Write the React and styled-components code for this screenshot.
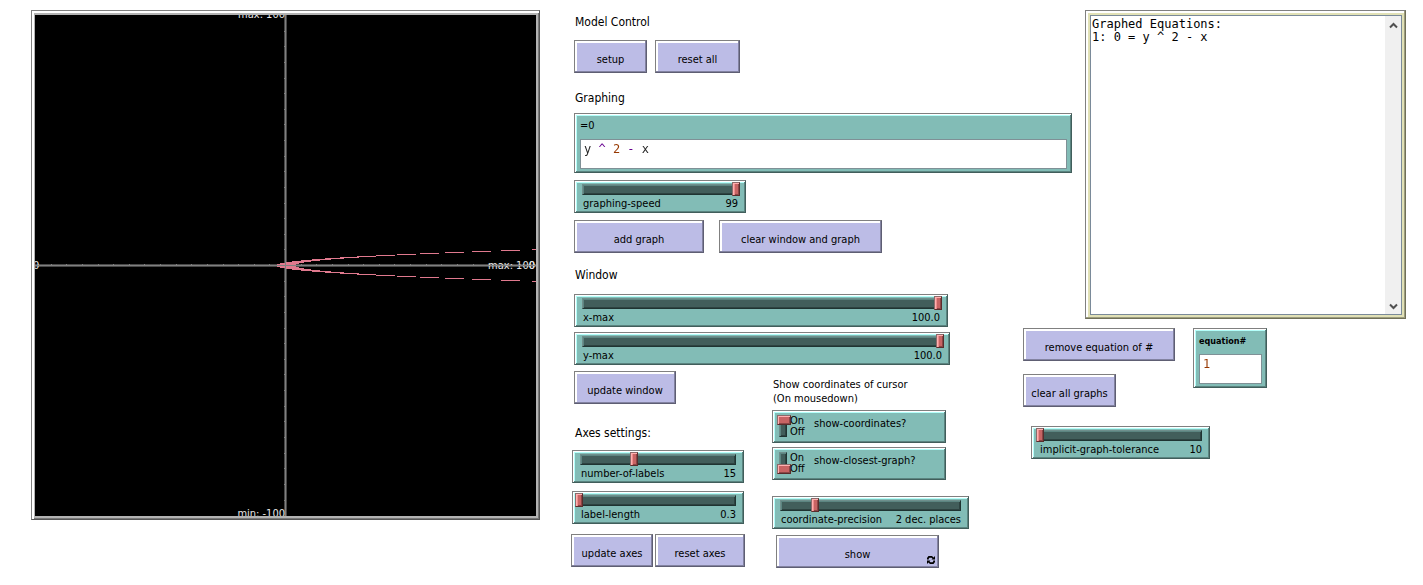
import React, { useId, useState } from 'react';
import styled, { createGlobalStyle, css } from 'styled-components';

const colors = {
  button: '#bcbce6',
  widget: '#82bcb6',
  output: '#e1e1b6',
  groove: '#425e5b',
  thumb: '#c86464',
  curve: '#e0798e',
};

const sans = '"DejaVu Sans Condensed", "DejaVu Sans", sans-serif';
const mono = '"DejaVu Sans Mono", "Liberation Mono", monospace';

const GlobalStyle = createGlobalStyle`
  * { box-sizing: border-box; }
  body {
    margin: 0;
    background: #fff;
    color: #000;
    font: 11px/14px ${sans};
  }
  button, input { font: inherit; color: inherit; }
`;

const Page = styled.main`
  display: grid;
  grid-template-columns: 509fr 835fr;
  gap: 31px;
  align-items: start;
  padding: 10px 17px 10px 31px;
`;

const Workspace = styled.div`
  display: flex;
  flex-direction: column;
  gap: 1px;
`;

const Upper = styled.section`
  display: grid;
  grid-template-columns: 501fr 321fr;
  gap: 13px;
`;

const Lower = styled.section`
  display: grid;
  grid-template-columns: 439fr 383fr;
  gap: 13px;
`;

const Stack = styled.div`
  display: flex;
  flex-direction: column;
  align-items: flex-start;
  gap: ${(p) => p.$gap || 0}px;
  padding-top: ${(p) => p.$top || 0}px;
  padding-left: ${(p) => p.$indent || 0}px;
`;

const Row = styled.div`
  display: flex;
  align-items: flex-start;
  gap: ${(p) => p.$gap || 0}px;
`;

const Heading = styled.h2`
  margin: 0;
  padding: ${(p) => p.$above || 0}px 0 ${(p) => p.$below || 0}px 1px;
  font-size: 12px;
  line-height: 16px;
  font-weight: normal;
`;

const Note = styled.p`
  margin: 0;
  padding-left: 1px;
`;

const bevel = css`
  border: 1px solid;
  border-color: #808080 #415e5b #415e5b #808080;
  box-shadow: inset 1px 1px #fff, inset -1px -1px #5b8480, inset 2px 2px #b4fffa;
`;

const PushButton = styled.button`
  position: relative;
  width: ${(p) => p.$width}px;
  max-width: 100%;
  height: 33px;
  padding: 6px 0 0;
  border: 1px solid;
  border-color: #808080 #5e5e73 #5e5e73 #808080;
  border-radius: 0;
  background: ${colors.button};
  box-shadow: inset -1px -1px #8383a1, inset 2px 2px #fff;
  line-height: 14px;
  white-space: nowrap;
`;

const ForeverIcon = styled.svg`
  position: absolute;
  right: 2px;
  bottom: 2px;
  width: 10px;
  height: 10px;
`;

/* Slider */

const SliderBox = styled.div`
  width: ${(p) => p.$width}px;
  max-width: 100%;
  height: 33px;
  padding: 3px 7px 0;
  background: ${colors.widget};
  ${bevel}
`;

const Groove = styled.div`
  height: 11px;
  border: 1px solid;
  border-color: #6f8f8c #1f3432 #1f3432 #6f8f8c;
  background: ${colors.groove};
  box-shadow: inset 1px 1px #5c8581, inset -1px -1px #2e4341;
`;

const Range = styled.input`
  appearance: none;
  display: block;
  width: calc(100% + 9px);
  height: 14px;
  margin: -3px 0 0 -6px;
  background: transparent;
  &::-webkit-slider-thumb {
    appearance: none;
    width: 8px;
    height: 14px;
    border: 1px solid;
    border-color: #8c6a6a #5a2c2c #5a2c2c #8c6a6a;
    background: ${colors.thumb};
    box-shadow: inset 1px 1px #ffb0b0, inset 2px 0 #f08c8c, inset -1px -1px #8c4646;
  }
`;

const Caption = styled.div`
  display: flex;
  justify-content: space-between;
  padding: 2px 0 0 1px;
  white-space: nowrap;
`;

function Slider({ label, width, min, max, step = 1, start, format }) {
  const id = useId();
  const [value, setValue] = useState(start);
  return (
    <SliderBox $width={width}>
      <Groove>
        <Range
          id={id}
          type="range"
          min={min}
          max={max}
          step={step}
          value={value}
          onChange={(e) => setValue(Number(e.target.value))}
        />
      </Groove>
      <Caption>
        <label htmlFor={id}>{label}</label>
        <span>{format ? format(value) : value}</span>
      </Caption>
    </SliderBox>
  );
}

/* Switch */

const SwitchBox = styled.label`
  display: flex;
  align-items: flex-start;
  width: 174px;
  height: 33px;
  padding: 4px 4px 0;
  background: ${colors.widget};
  white-space: nowrap;
  ${bevel}
`;

const Toggle = styled.input`
  appearance: none;
  position: relative;
  flex: none;
  width: 13px;
  height: 22px;
  margin: 0;
  &::before {
    content: '';
    position: absolute;
    inset: 0 3px 0 2px;
    border: 1px solid;
    border-color: #6f8f8c #1f3432 #1f3432 #6f8f8c;
    background: ${colors.groove};
    box-shadow: inset 1px 1px #5c8581, inset -1px -1px #2e4341;
  }
  &::after {
    content: '';
    position: absolute;
    left: 0;
    bottom: 0;
    width: 12px;
    height: 8px;
    border: 1px solid;
    border-color: #8c6a6a #5a2c2c #5a2c2c #8c6a6a;
    background: ${colors.thumb};
    box-shadow: inset 1px 1px #ffb0b0, inset -1px -1px #8c4646;
  }
  &:checked::after {
    top: 0;
    bottom: auto;
  }
`;

const States = styled.span`
  display: flex;
  flex-direction: column;
  width: 24px;
  line-height: 11px;
`;

const SwitchName = styled.span`
  padding-top: 2px;
`;

function Switch({ label, on }) {
  return (
    <SwitchBox>
      <Toggle type="checkbox" defaultChecked={on} />
      <States aria-hidden="true">
        <span>On</span>
        <span>Off</span>
      </States>
      <SwitchName>{label}</SwitchName>
    </SwitchBox>
  );
}

/* Text entry */

const FieldBox = styled.div`
  width: ${(p) => p.$width};
  height: 60px;
  padding: 4px 4px 0 5px;
  background: ${colors.widget};
  ${bevel}
`;

const FieldLabel = styled.label`
  display: block;
  height: 21px;
  padding-top: 1px;
  font-weight: ${(p) => (p.$strong ? 'bold' : 'normal')};
  font-size: ${(p) => (p.$strong ? 9 : 11)}px;
`;

const Well = styled.div`
  height: 30px;
  padding: 2px 3px 0;
  border: 1px solid #7f9096;
  background: #fff;
`;

const ink = '#222';
const operator = '#66008f';
const number = '#963700';

const CodeInput = styled.input`
  display: block;
  width: 100%;
  height: 14px;
  padding: 0;
  border: 0;
  outline: 0;
  font: 12px/14px ${mono};
  caret-color: #000;
  background: ${(p) =>
    p.$numeric
      ? `linear-gradient(${number}, ${number})`
      : `linear-gradient(90deg, ${ink} 2ch, ${operator} 2ch 4ch, ${number} 4ch 6ch, ${operator} 6ch 8ch, ${ink} 8ch)`};
  background-clip: text;
  -webkit-text-fill-color: transparent;
`;

function Field({ label, width, value, strong, numeric }) {
  const id = useId();
  return (
    <FieldBox $width={width}>
      <FieldLabel htmlFor={id} $strong={strong}>{label}</FieldLabel>
      <Well>
        <CodeInput id={id} type="text" defaultValue={value} $numeric={numeric} spellCheck={false} />
      </Well>
    </FieldBox>
  );
}

/* Output area */

const OutputBox = styled.div`
  height: 309px;
  padding: 4px 3px 3px 4px;
  border: 1px solid;
  border-color: #808080 #707058 #707058 #808080;
  background: ${colors.output};
  box-shadow: inset -1px -1px #9d9d7f, inset 2px 2px #fff;
`;

const OutputPane = styled.div`
  display: flex;
  height: 100%;
  border: 1px solid #7a8a99;
  background: #fff;
`;

const OutputText = styled.pre`
  flex: 1;
  margin: 0;
  padding: 2px 1px;
  font: 12px/13px ${mono};
`;

const ScrollBar = styled.div`
  display: flex;
  flex-direction: column;
  justify-content: space-between;
  align-items: center;
  width: 16px;
  padding: 6px 0 4px;
  background: #f0f0f0;
`;

const Chevron = ({ d }) => (
  <svg width="9" height="7" viewBox="0 0 9 7" aria-hidden="true">
    <path d={d} fill="none" stroke="#505050" strokeWidth="2" />
  </svg>
);

/* World view */

const ViewFrame = styled.div`
  padding: 4px 3px 3px 3px;
  border: 1px solid;
  border-color: #808080 #555 #555 #808080;
  background: #b3b3b3;
  box-shadow: inset 2px 2px #fff, inset -1px -1px #777;
`;

const World = styled.svg`
  display: block;
  width: 100%;
  height: auto;
  background: #000;
  text {
    font: 11px ${sans};
    fill: #e6e6e6;
  }
`;

const steps = Array.from({ length: 17 }, (_, k) => k);
const ticks = Array.from({ length: 31 }, (_, i) => Math.round((i + 1) * 15.63));

function WorldView() {
  return (
    <ViewFrame>
      <World viewBox="0 0 501 501" shapeRendering="crispEdges" role="img" aria-label="Graph window">
        <path d="M249 0h3v501h-3zM0 249h501v3H0z" fill="#484848" />
        {steps.map((k) => (
          <g key={k} fill={colors.curve}>
            <rect x={242 + k * k - (k > 0 ? 1 : 0)} y={250 - k} width="19" height="1" />
            <rect x={242 + k * k - (k > 0 ? 1 : 0)} y={250 + k} width="19" height="1" />
          </g>
        ))}
        <text x="250" y="3" textAnchor="end">max: 100</text>
        <text x="250" y="502" textAnchor="end">min: -100</text>
        <text x="500" y="254" textAnchor="end">max: 100</text>
        <text x="500" y="254" textAnchor="end">0</text>
        <text x="-2" y="254">0</text>
        <path d="M250 0h1v501h-1zM0 250h501v1H0z" fill="#808080" />
        {ticks.map((t) => (
          <path key={t} d={`M${t} 249h1v1h-1zM249 ${t}h1v1h-1z`} fill="#808080" />
        ))}
      </World>
    </ViewFrame>
  );
}

const LowerColumns = styled.div`
  display: grid;
  grid-template-columns: 174px 197px;
  gap: 27px;
`;

const oneDecimal = (v) => v.toFixed(1);

export default function App() {
  return (
    <>
      <GlobalStyle />
      <Page>
        <WorldView />
        <Workspace>
          <Upper>
            <Stack $gap={7} $top={4} $indent={3}>
              <Heading $below={3}>Model Control</Heading>
              <Row $gap={8}>
                <PushButton type="button" $width={73}>setup</PushButton>
                <PushButton type="button" $width={85}>reset all</PushButton>
              </Row>
              <Heading $above={10}>Graphing</Heading>
              <Field label="=0" width="100%" value="y ^ 2 - x" />
              <Slider label="graphing-speed" width={172} min={0} max={99} start={99} />
              <Row $gap={15}>
                <PushButton type="button" $width={130}>add graph</PushButton>
                <PushButton type="button" $width={163}>clear window and graph</PushButton>
              </Row>
              <Heading $above={7} $below={4}>Window</Heading>
              <Slider label="x-max" width={374} min={0} max={100} start={100} format={oneDecimal} />
            </Stack>
            <OutputBox>
              <OutputPane>
                <OutputText>{'Graphed Equations:\n1: 0 = y ^ 2 - x'}</OutputText>
                <ScrollBar>
                  <Chevron d="M1 5.500L4.500 2L8 5.500" />
                  <Chevron d="M1 1.500L4.500 5L8 1.500" />
                </ScrollBar>
              </OutputPane>
            </OutputBox>
          </Upper>
          <Lower>
            <Stack $gap={6} $top={4}>
              <Stack $indent={3}>
                <Slider label="y-max" width={376} min={0} max={100} start={100} format={oneDecimal} />
              </Stack>
              <LowerColumns>
                <Stack $gap={8}>
                  <Stack $indent={3}>
                    <PushButton type="button" $width={102}>update window</PushButton>
                    <Heading $above={21} $below={1}>Axes settings:</Heading>
                  </Stack>
                  <Stack $gap={8} $indent={1}>
                    <Slider label="number-of-labels" width={172} min={0} max={42} start={15} />
                    <Slider label="label-length" width={172} min={0.3} max={5.3} step={0.1} start={0.3} format={oneDecimal} />
                  </Stack>
                  <Stack $top={2}>
                    <Row $gap={2}>
                      <PushButton type="button" $width={82}>update axes</PushButton>
                      <PushButton type="button" $width={90}>reset axes</PushButton>
                    </Row>
                  </Stack>
                </Stack>
                <Stack $gap={4} $top={7}>
                  <Note>
                    Show coordinates of cursor
                    <br />
                    (On mousedown)
                  </Note>
                  <Switch label="show-coordinates?" on />
                  <Switch label="show-closest-graph?" />
                  <Stack $top={12}>
                    <Slider
                      label="coordinate-precision"
                      width={197}
                      min={0}
                      max={10}
                      start={2}
                      format={(v) => `${v} dec. places`}
                    />
                  </Stack>
                  <Stack $top={2} $indent={4}>
                    <PushButton type="button" $width={163}>
                      show
                      <ForeverIcon viewBox="0 0 10 10" aria-hidden="true">
                        <path d="M1 4.500V3L2.500 1H6L7.500 2.500L9 1V4.500H5.500L6.500 3.500L5.500 2.700H3.500L2.800 3.500V4.500z" />
                        <path d="M9 5.500V7L7.500 9H4L2.500 7.500L1 9V5.500H4.500L3.500 6.500L4.500 7.300H6.500L7.200 6.500V5.500z" />
                      </ForeverIcon>
                    </PushButton>
                  </Stack>
                </Stack>
              </LowerColumns>
            </Stack>
            <Stack $gap={19}>
              <Row $gap={18}>
                <Stack $gap={13}>
                  <PushButton type="button" $width={152}>remove equation of #</PushButton>
                  <PushButton type="button" $width={93}>clear all graphs</PushButton>
                </Stack>
                <Field label="equation#" width="74px" value="1" strong numeric />
              </Row>
              <Stack $indent={8}>
                <Slider label="implicit-graph-tolerance" width={179} min={0} max={1000} start={10} />
              </Stack>
            </Stack>
          </Lower>
        </Workspace>
      </Page>
    </>
  );
}
